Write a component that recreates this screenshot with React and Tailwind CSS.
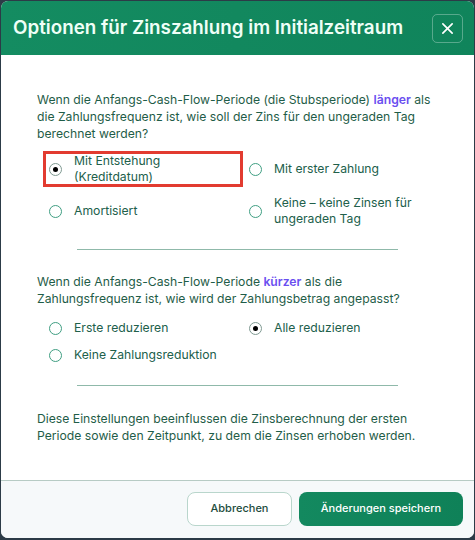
import React from "react";

function Radio({ checked }) {
  return (
    <span
      className={
        "flex h-[13px] w-[13px] shrink-0 items-center justify-center rounded-full border-[1.5px] bg-white " +
        (checked ? "border-[#7f9a92]" : "border-[#3f9e82]")
      }
    >
      {checked && <span className="h-[5px] w-[5px] rounded-full bg-black" />}
    </span>
  );
}

function Option({ label, checked, highlight }) {
  return (
    <label
      className={
        "flex items-center gap-[12px] py-[2px] pl-[6px] text-[12.2px] leading-[16px] text-[#21604b] " +
        (highlight ? "ring-[3px] ring-inset ring-[#e23b30]" : "")
      }
    >
      <Radio checked={checked} />
      <span>{label}</span>
    </label>
  );
}

const first = [
  { label: <>Mit Entstehung<br />(Kreditdatum)</>, checked: true, highlight: true },
  { label: "Mit erster Zahlung" },
  { label: "Amortisiert" },
  { label: <>Keine – keine Zinsen für<br />ungeraden Tag</> },
];

const second = [
  { label: "Erste reduzieren" },
  { label: "Alle reduzieren", checked: true },
  { label: "Keine Zahlungsreduktion" },
];

export default function App() {
  return (
    <div className="h-[540px] w-[475px] bg-[#2c3b47] px-[1px] pt-[1px]" style={{ fontFamily: "Inter, 'Noto Sans', sans-serif" }}>
      <div className="flex h-[537px] flex-col overflow-hidden rounded-[7px] bg-white">
        <div className="flex h-[54px] shrink-0 items-center justify-between bg-gradient-to-r from-[#148c61] to-[#10845b] pl-[12px] pr-[11px]">
          <h2 className="text-[18.8px] font-semibold text-[#effff7]">Optionen für Zinszahlung im Initialzeitraum</h2>
          <button className="flex h-[29px] w-[31px] items-center justify-center rounded-[5px] border border-white/30 text-white">
            <svg width="13" height="13" viewBox="0 0 14 14" fill="none" stroke="currentColor" strokeWidth="1.8" strokeLinecap="round">
              <path d="M2 2l10 10M12 2L2 12" />
            </svg>
          </button>
        </div>

        <div className="flex-1 px-[36px] pt-[36px] text-[12.2px] leading-[17px] text-[#1f5d48]">
          <p>
            Wenn die Anfangs-Cash-Flow-Periode (die Stubsperiode){" "}
            <span className="font-semibold text-[#6a4ff0]">länger</span> als die Zahlungsfrequenz ist, wie soll der Zins für den
            ungeraden Tag berechnet werden?
          </p>
          <div className="ml-[6px] mt-[9px] grid grid-cols-[200px_1fr] gap-y-[6px]">
            {first.map((o, i) => (
              <Option key={i} {...o} />
            ))}
          </div>
          <div className="mx-auto mt-[20px] h-px w-4/5 bg-[#8fb9aa]" />

          <p className="mt-[23px]">
            Wenn die Anfangs-Cash-Flow-Periode <span className="font-semibold text-[#6a4ff0]">kürzer</span> als die
            Zahlungsfrequenz ist, wie wird der Zahlungsbetrag angepasst?
          </p>
          <div className="ml-[6px] mt-[11px] grid grid-cols-[200px_1fr] gap-y-[7px]">
            {second.map((o, i) => (
              <Option key={i} {...o} />
            ))}
          </div>
          <div className="mx-auto mt-[20px] h-px w-4/5 bg-[#8fb9aa]" />

          <p className="mt-[24px]">
            Diese Einstellungen beeinflussen die Zinsberechnung der ersten Periode sowie den Zeitpunkt, zu dem die Zinsen
            erhoben werden.
          </p>
        </div>

        <div className="flex h-[58px] shrink-0 items-center justify-end gap-[7px] border-t border-[#b7cbc4] bg-[#f6f9fa] pb-[2px] pr-[11px]">
          <button className="h-[34px] w-[105px] rounded-[8px] border border-[#b9d6cc] bg-white text-[11px] font-medium text-[#1d4c3d]">
            Abbrechen
          </button>
          <button className="h-[34px] w-[164px] rounded-[8px] bg-gradient-to-r from-[#13895f] to-[#0f8158] text-[11px] font-medium text-white">
            Änderungen speichern
          </button>
        </div>
      </div>
    </div>
  );
}
